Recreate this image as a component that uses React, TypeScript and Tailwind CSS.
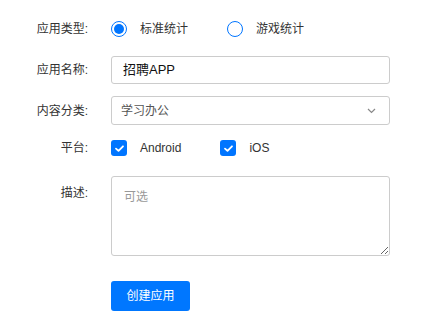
import React from "react";

const font = { fontFamily: '"Liberation Sans", "Noto Sans CJK SC", sans-serif' };

function Radio({ checked }: { checked?: boolean }) {
  return (
    <span className="flex h-[16px] w-[16px] items-center justify-center rounded-full border-[1.5px] border-[#0075ff] bg-white">
      {checked && <span className="h-[10px] w-[10px] rounded-full bg-[#0075ff]" />}
    </span>
  );
}

function Check() {
  return (
    <span className="flex h-[16px] w-[16px] items-center justify-center rounded-[3px] bg-[#0075ff]">
      <svg width="11" height="11" viewBox="0 0 12 12" fill="none">
        <path d="M2.2 6.2 L4.9 8.6 L9.8 3.6" stroke="white" strokeWidth="2" strokeLinecap="round" strokeLinejoin="round" />
      </svg>
    </span>
  );
}

function Label({ children, top }: { children: React.ReactNode; top?: boolean }) {
  return (
    <div className={`w-[88px] shrink-0 text-right text-[12px] text-[#333] ${top ? "self-start pt-[8px]" : ""}`}>
      {children}
    </div>
  );
}

export default function App() {
  return (
    <div className="h-[328px] w-[430px] bg-white" style={font}>
      <div className="flex flex-col pt-[15px]">
        <div className="flex h-[28px] items-center gap-[23px]">
          <Label>应用类型:</Label>
          <div className="flex items-center text-[12px] text-[#333]">
            <Radio checked />
            <span className="ml-[13px]">标准统计</span>
            <span className="ml-[39px]">
              <Radio />
            </span>
            <span className="ml-[13px]">游戏统计</span>
          </div>
        </div>

        <div className="mt-[13px] flex items-center gap-[23px]">
          <Label>应用名称:</Label>
          <div className="flex h-[28px] w-[279px] items-center rounded-[3px] border border-[#ccc] pl-[11px] text-[13px] text-[#111]">
            招聘APP
          </div>
        </div>

        <div className="mt-[12px] flex items-center gap-[23px]">
          <Label>内容分类:</Label>
          <div className="flex h-[29px] w-[279px] items-center justify-between rounded-[3px] border border-[#ccc] pl-[9px] pr-[13px] text-[12px] text-[#555]">
            <span>学习办公</span>
            <svg width="9" height="6" viewBox="0 0 9 6" fill="none">
              <path d="M1 1 L4.5 4.5 L8 1" stroke="#888" strokeWidth="1.2" />
            </svg>
          </div>
        </div>

        <div className="mt-[9px] flex h-[28px] items-center gap-[23px]">
          <Label>平台:</Label>
          <div className="flex items-center text-[12px] text-[#333]">
            <Check />
            <span className="ml-[13px]">Android</span>
            <span className="ml-[39px]">
              <Check />
            </span>
            <span className="ml-[13px]">iOS</span>
          </div>
        </div>

        <div className="mt-[14px] flex gap-[23px]">
          <Label top>描述:</Label>
          <textarea
            placeholder="可选"
            className="h-[80px] w-[279px] rounded-[3px] border border-[#ccc] px-[12px] pb-[8px] pt-[11px] text-[12px] text-[#333] outline-none placeholder:text-[#999]"
            style={font}
          />
        </div>

        <div className="mt-[25px] flex gap-[23px]">
          <div className="w-[88px] shrink-0" />
          <button className="flex h-[30px] w-[79px] items-center justify-center rounded-[3px] bg-[#0077ff] text-[12px] text-white">
            创建应用
          </button>
        </div>
      </div>
    </div>
  );
}
